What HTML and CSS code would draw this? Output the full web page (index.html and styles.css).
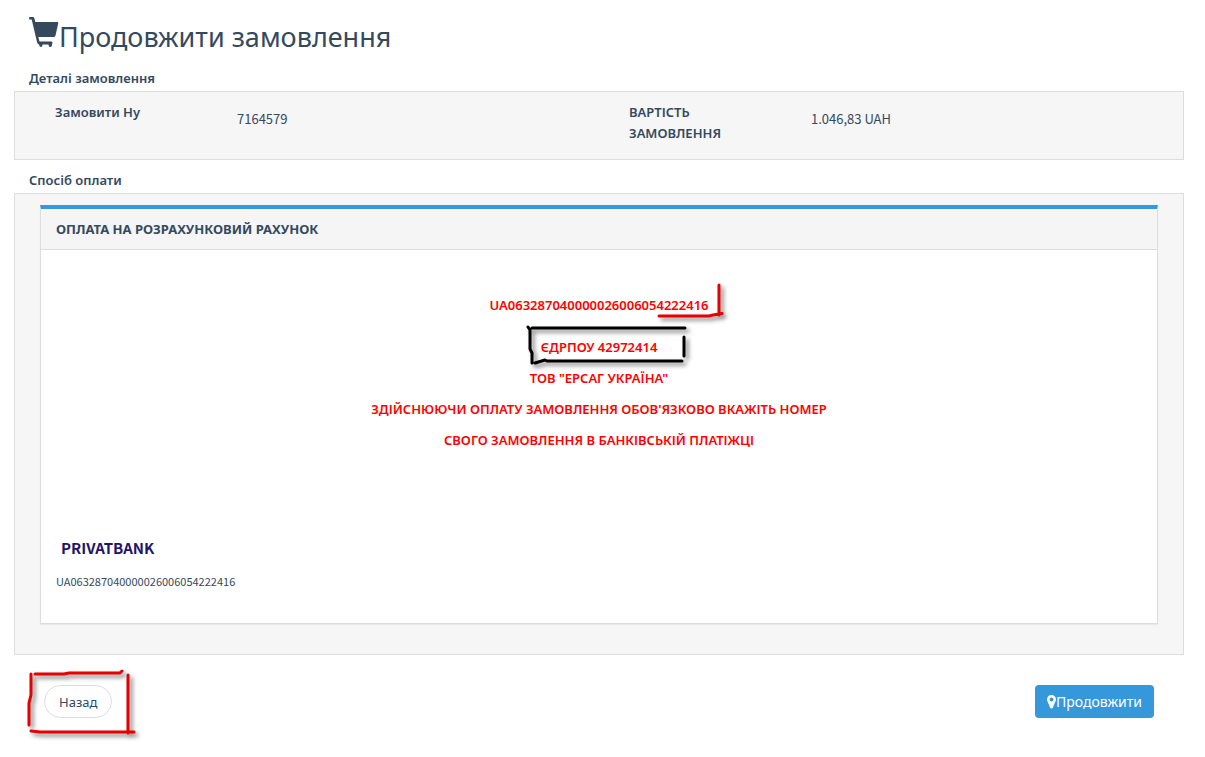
FILE: index.html
```
<!DOCTYPE html>
<html lang="uk">
<head>
    <meta charset="UTF-8">
    <meta name="viewport" content="width=device-width, initial-scale=1.0">
    <title>Продовжити замовлення</title>
    <link rel="stylesheet" href="styles.css">
</head>
<body>
    <main class="page">
        <h1 class="page-title">
            <svg class="cart-icon" viewBox="0 0 30 32" aria-hidden="true">
                <path d="M0 2Q0 1 1 1H4Q5 1 5.300 2.200L6.300 6H28.500Q29.500 6 29.200 7.500L26.500 19.500Q26.200 21 24.500 21H9.300L10.500 25.500H22.500Q23.700 25.500 23.500 27L23 28V29.500Q22.500 31 21 31Q19.500 31 19.500 28.500H13.500Q13.500 31 12 31Q10.500 31 10 28.500Q8.500 28 8 26L2.700 3.500H1Q0 3.500 0 2Z"/>
            </svg><span>Продовжити замовлення</span>
        </h1>

        <!-- Order details -->
        <h2 class="section-title">Деталі замовлення</h2>
        <section class="panel">
            <dl class="details">
                <dt>Замовити Ну</dt>
                <dd>7164579</dd>
                <dt>ВАРТІСТЬ ЗАМОВЛЕННЯ</dt>
                <dd>1.046,83 UAH</dd>
            </dl>
        </section>

        <!-- Payment method -->
        <h2 class="section-title">Спосіб оплати</h2>
        <section class="panel payment">
            <div class="card">
                <h3 class="card-title">ОПЛАТА НА РОЗРАХУНКОВИЙ РАХУНОК</h3>
                <div class="card-body">
                    <div class="notice">
                        <p class="account"><span class="marked">UA063287040000026006054222416
                            <svg class="mark mark-account" viewBox="0 0 76 44" aria-hidden="true">
                                <path d="M5 34H55L59 33L68 31.500M65 3V33"/>
                            </svg></span>
                        </p>
                        <p><span class="marked">ЄДРПОУ 42972414
                            <svg class="mark mark-code" viewBox="0 0 170 46" aria-hidden="true">
                                <path d="M8 5H161M4 4L6 7V26L8 30V40M11 40L21 37L23 38H158M160 14V33"/>
                            </svg></span>
                        </p>
                        <p>ТОВ "ЕРСАГ УКРАЇНА"</p>
                        <p>ЗДІЙСНЮЮЧИ ОПЛАТУ ЗАМОВЛЕННЯ ОБОВ'ЯЗКОВО ВКАЖІТЬ НОМЕР</p>
                        <p>СВОГО ЗАМОВЛЕННЯ В БАНКІВСЬКІЙ ПЛАТІЖЦІ</p>
                    </div>
                    <h4 class="bank">PRIVATBANK</h4>
                    <p class="iban">UA063287040000026006054222416</p>
                </div>
            </div>
        </section>

        <div class="actions">
            <div class="marked">
                <button type="button" class="btn btn-back">Назад</button>
                <svg class="mark mark-back" viewBox="0 0 116 76" aria-hidden="true">
                    <path d="M11 7H40L45 6H96L98 4M7 7V28L5 36V58M7 64L16 65H110M104 8V66"/>
                </svg>
            </div>
            <button type="button" class="btn btn-next">
                <svg class="pin-icon" viewBox="0 0 9 14" aria-hidden="true">
                    <path fill-rule="evenodd" d="M4.500 0A4.500 4.500 0 0 0 0 4.500C0 6.200 1.500 8 3 12.500Q3.500 13.500 4.500 13.500Q5.500 13.500 6 12.500C7.500 8 9 6.200 9 4.500A4.500 4.500 0 0 0 4.500 0ZM4.500 2.500A2 2 0 1 1 4.500 6.500A2 2 0 1 1 4.500 2.500Z"/>
                </svg><span>Продовжити</span>
            </button>
        </div>
    </main>
</body>
</html>
```
FILE: styles.css
```
* {
    box-sizing: border-box;
}

body {
    margin: 0;
    background-color: #fff;
    color: #34495e;
    font-family: "Noto Sans", sans-serif;
    font-size: 13px;
    line-height: 21px;
}

h1, h2, h3, h4, p, dl, dd {
    margin: 0;
}

.page {
    padding: 16px 21px 38px 14px;
}

.page-title {
    display: flex;
    padding-left: 15px;
    font-size: 27px;
    font-weight: 400;
    line-height: 42px;
}

.cart-icon {
    width: 30px;
    height: 32px;
    fill: #34495e;
}

.section-title {
    padding-left: 15px;
    font-size: 13px;
    font-weight: 600;
    margin-top: 10px;
    margin-bottom: 2px;
}

.panel {
    background-color: #f6f6f6;
    border: 1px solid #ddd;
}

.details {
    display: grid;
    grid-template-columns: 182fr 392fr 182fr 372fr;
    padding: 10px 0 15px 40px;
}

.details dt {
    padding-right: 64px;
    font-weight: 600;
}

.details dd {
    padding-top: 6px;
    font-family: "Noto Sans CJK SC", sans-serif;
}

.payment {
    padding: 11px 25px 30px;
}

.card {
    background-color: #fff;
    border: 1px solid #ddd;
    border-top: 4px solid #3498db;
    box-shadow: 0 1px 1px rgba(0, 0, 0, 0.05);
}

.card-title {
    padding: 0 15px;
    background-color: #f5f5f5;
    border-bottom: 1px solid #ddd;
    font-size: 13px;
    font-weight: 700;
    line-height: 40px;
}

.card-body {
    padding: 45px 15px 31px;
}

.notice {
    display: flex;
    flex-direction: column;
    gap: 10px;
    color: #f00;
    font-weight: 600;
    text-align: center;
}

.account {
    margin-bottom: 11px;
}

.bank {
    margin-top: 86px;
    padding-left: 5px;
    color: #23136b;
    font-family: "Noto Sans CJK SC", sans-serif;
    font-size: 15px;
    font-weight: 700;
}

.iban {
    margin-top: 13px;
    font-family: "Noto Sans CJK SC", sans-serif;
    font-size: 11px;
}

.actions {
    display: flex;
    justify-content: space-between;
    padding: 30px 30px 0;
}

.btn {
    display: flex;
    align-items: center;
    height: 33px;
    font-family: inherit;
    font-size: 13px;
    cursor: pointer;
}

.btn-back {
    padding: 0 14px;
    background-color: #fff;
    border: 1px solid #ddd;
    border-radius: 17px;
    color: #34495e;
}

.btn-next {
    padding: 0 12px;
    background-color: #3498db;
    border: none;
    border-radius: 4px;
    color: #fff;
    font-size: 14px;
}

.pin-icon {
    width: 9px;
    height: 14px;
    fill: #fff;
}

/* Hand-drawn marks over the important parts */
.marked {
    position: relative;
}

.mark {
    position: absolute;
    fill: none;
    stroke: #e60000;
    stroke-width: 3;
    stroke-linecap: round;
    stroke-linejoin: round;
    filter: drop-shadow(3px 3px 2px rgba(0, 0, 0, 0.5));
    pointer-events: none;
    overflow: visible;
}

.mark-account {
    width: 76px;
    height: 44px;
    top: -14px;
    right: -21px;
}

.mark-code {
    width: 170px;
    height: 46px;
    top: -15px;
    left: -17px;
    stroke: #000;
}

.mark-back {
    width: 116px;
    height: 76px;
    top: -18px;
    left: -20px;
}
```
